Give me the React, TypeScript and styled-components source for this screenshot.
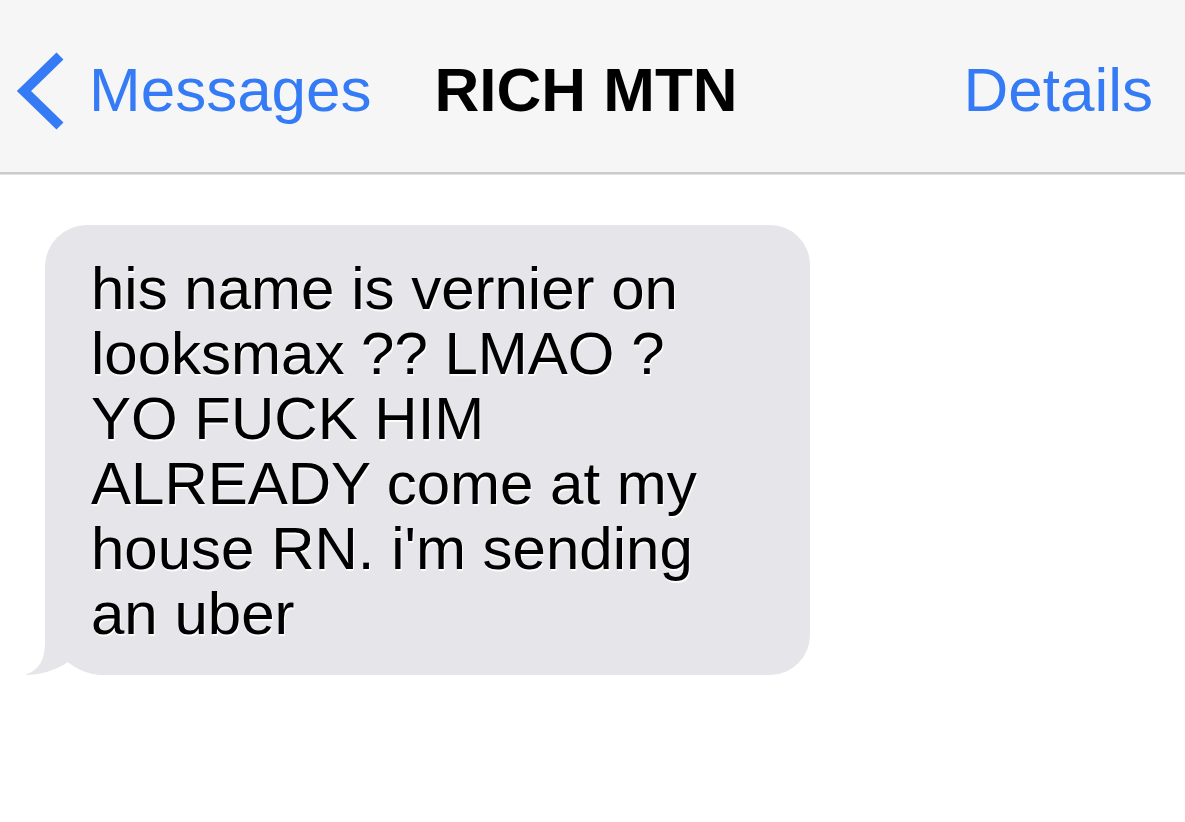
import React from "react";
import styled, { createGlobalStyle } from "styled-components";

const GlobalStyle = createGlobalStyle`
  html, body {
    margin: 0;
    padding: 0;
    background: #ffffff;
    font-family: "Liberation Sans", Arial, sans-serif;
  }
  #root {
    width: 1185px;
    height: 822px;
    overflow: hidden;
    background: #ffffff;
  }
`;

const Page = styled.div`
  display: flex;
  flex-direction: column;
  width: 1185px;
  height: 822px;
`;

const NavBar = styled.header`
  box-sizing: border-box;
  height: 174px;
  display: flex;
  align-items: flex-start;
  padding: 55px 32px 0 10px;
  background: #f6f6f6;
  border-bottom: 2px solid #cbcbcb;
  box-shadow: 0 1px 0 #e2e2e2;
`;

const BackButton = styled.div`
  display: flex;
  align-items: flex-start;
`;

const Chevron = styled.svg`
  width: 50px;
  height: 80px;
  margin-top: -5px;
  overflow: visible;
  flex-shrink: 0;
`;

const NavText = styled.span<{ $bold?: boolean; $blue?: boolean }>`
  font-family: "Liberation Sans", Arial, sans-serif;
  font-size: 62px;
  line-height: 70px;
  font-weight: ${(p) => (p.$bold ? 700 : 400)};
  color: ${(p) => (p.$blue ? "#347bf5" : "#000000")};
  white-space: nowrap;
`;

const BackLabel = styled(NavText)`
  margin-left: 29px;
`;

const Title = styled(NavText)`
  margin-left: 63px;
`;

const Details = styled(NavText)`
  margin-left: auto;
`;

const Thread = styled.main`
  flex: 1;
  display: flex;
  flex-direction: column;
  align-items: flex-start;
  padding: 51px 0 0 45px;
`;

const Bubble = styled.div`
  position: relative;
  box-sizing: border-box;
  width: 765px;
  padding: 31px 20px 29px 46px;
  background: #e5e5ea;
  border-radius: 42px 40px 40px 60px;
`;

const BubbleText = styled.p`
  position: relative;
  z-index: 1;
  margin: 0;
  font-family: "Liberation Sans", Arial, sans-serif;
  font-size: 60px;
  line-height: 65px;
  color: #000000;
  text-shadow: 1px 2px 1px rgba(255, 255, 255, 0.95);
  white-space: pre-line;
`;

const Tail = styled.svg`
  position: absolute;
  left: -20px;
  bottom: 0;
  width: 82px;
  height: 60px;
  overflow: visible;
`;

export default function App() {
  return (
    <>
      <GlobalStyle />
      <Page>
        <NavBar>
          <BackButton>
            <Chevron viewBox="0 0 50 80">
              <polyline
                points="50,6 14,41 50,76"
                fill="none"
                stroke="#347bf5"
                strokeWidth="10"
                strokeLinecap="butt"
                strokeLinejoin="miter"
              />
            </Chevron>
            <BackLabel $blue>Messages</BackLabel>
          </BackButton>
          <Title $bold>RICH MTN</Title>
          <Details $blue>Details</Details>
        </NavBar>
        <Thread>
          <Bubble>
            <Tail viewBox="0 0 82 60">
              <path
                d="M20,0 L20,28 C20,45 14,55 0,60 C14,60 30,56 43,47 C54,55 64,60 82,60 L82,0 Z"
                fill="#e5e5ea"
              />
            </Tail>
            <BubbleText>
              {"his name is vernier on\nlooksmax ?? LMAO ?\nYO FUCK HIM\nALREADY come at my\nhouse RN. i'm sending\nan uber"}
            </BubbleText>
          </Bubble>
        </Thread>
      </Page>
    </>
  );
}
